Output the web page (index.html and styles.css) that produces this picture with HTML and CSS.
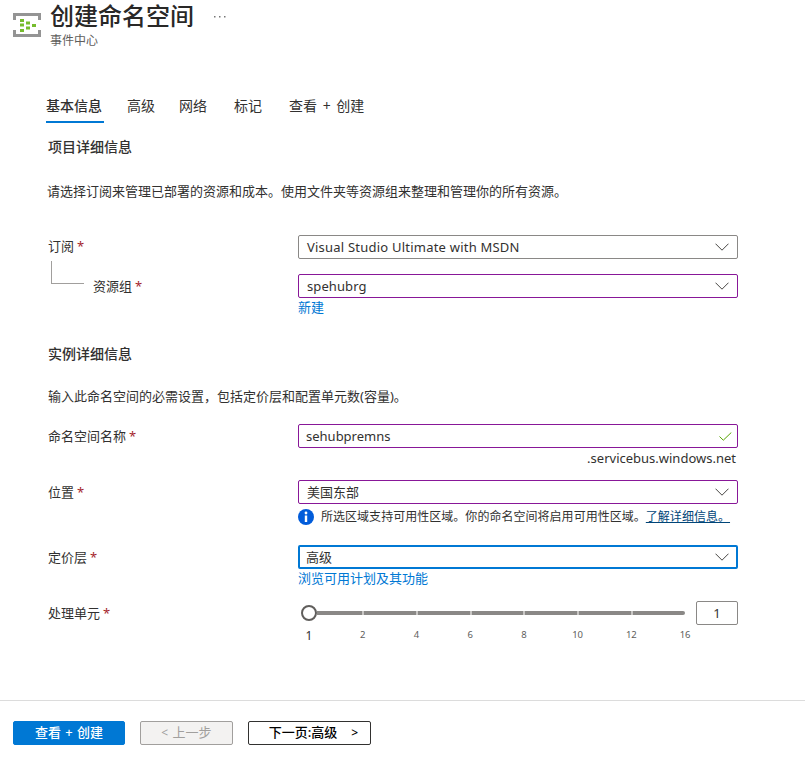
FILE: index.html
```html
<!DOCTYPE html>
<html lang="zh-CN">
<head>
<meta charset="utf-8">
<title>创建命名空间</title>
<link rel="stylesheet" href="styles.css">
</head>
<body>
<header class="header">
  <svg class="logo" width="28" height="24" viewBox="0 0 28 24">
    <path d="M0 0h28v7h-3V3H3v4H0zM0 24h28v-7h-3v4H3v-4H0z" fill="#949494"/>
    <path d="M7 6h4v3H7zM7 10.500h4v3H7zM7 16h4v3H7zM13 8.500h4v3h-4zM13 13.500h4v3h-4zM19 11h4v3h-4z" fill="#76bc2d"/>
  </svg>
  <div>
    <div class="title-line"><h1 class="title">创建命名空间</h1><svg class="more" width="12" height="4" viewBox="0 0 12 4"><path d="M0 1h1.500v1.500H0zM5 1h1.500v1.500H5zM10 1h1.500v1.500H10z" fill="#777"/></svg></div>
    <div class="subtitle">事件中心</div>
  </div>
</header>

<nav class="tabs">
  <a class="tab tab-active">基本信息</a>
  <a class="tab">高级</a>
  <a class="tab">网络</a>
  <a class="tab">标记</a>
  <a class="tab">查看 + 创建</a>
</nav>

<main class="form">
  <h2 class="heading">项目详细信息</h2>
  <p class="intro">请选择订阅来管理已部署的资源和成本。使用文件夹等资源组来整理和管理你的所有资源。</p>
  <div class="row row-subscription">
    <label class="label">订阅<span class="req">*</span></label>
    <div class="box"><span class="subscription">Visual Studio Ultimate with MSDN</span><svg class="chevron" width="14" height="8" viewBox="0 0 14 8"><path d="M.5.700 7 7.200 13.500.700"/></svg></div>
  </div>
  <div class="row row-group">
    <div class="nested"><span class="elbow"></span><label class="label">资源组<span class="req">*</span></label></div>
    <div>
      <div class="box box-edited"><span class="group-name">spehubrg</span><svg class="chevron" width="14" height="8" viewBox="0 0 14 8"><path d="M.5.700 7 7.200 13.500.700"/></svg></div>
      <a class="link link-new">新建</a>
    </div>
  </div>

  <h2 class="heading heading-instance">实例详细信息</h2>
  <p class="intro intro-instance">输入此命名空间的必需设置，包括定价层和配置单元数(容量)。</p>
  <div class="row row-name">
    <label class="label">命名空间名称<span class="req">*</span></label>
    <div>
      <div class="box box-edited box-valid"><span>sehubpremns</span><svg class="check" width="13" height="9" viewBox="0 0 13 9"><path d="M.5 4.500 4.300 8.200 12.300.500"/></svg></div>
      <div class="suffix">.servicebus.windows.net</div>
    </div>
  </div>
  <div class="row row-location">
    <label class="label">位置<span class="req">*</span></label>
    <div>
      <div class="box box-edited"><span>美国东部</span><svg class="chevron" width="14" height="8" viewBox="0 0 14 8"><path d="M.5.700 7 7.200 13.500.700"/></svg></div>
      <div class="info">
        <svg width="16" height="16" viewBox="0 0 16 16"><circle cx="8" cy="8" r="8" fill="#015cda"/><circle cx="8" cy="4" r="1.400" fill="#fff"/><path d="M6.800 6.500h2.400v6.500H6.800z" fill="#fff"/></svg>
        <span class="info-text">所选区域支持可用性区域。你的命名空间将启用可用性区域。<a class="info-link">了解详细信息。</a></span>
      </div>
    </div>
  </div>
  <div class="row row-tier">
    <label class="label">定价层<span class="req">*</span></label>
    <div>
      <div class="box box-focus"><span>高级</span><svg class="chevron" width="14" height="8" viewBox="0 0 14 8"><path d="M.5.700 7 7.200 13.500.700"/></svg></div>
      <a class="link link-plans">浏览可用计划及其功能</a>
    </div>
  </div>
  <div class="row row-units">
    <label class="label">处理单元<span class="req">*</span></label>
    <div>
      <div class="slider-line">
        <div class="slider"><span class="thumb"></span><span class="seg seg-first"></span><span class="seg"></span><span class="seg"></span><span class="seg"></span><span class="seg"></span><span class="seg"></span><span class="seg seg-last"></span></div>
        <div class="units">1</div>
      </div>
      <div class="ticks"><span class="tick-current">1</span><span>2</span><span>4</span><span>6</span><span>8</span><span>10</span><span>12</span><span>16</span></div>
    </div>
  </div>
</main>

<footer class="footer">
  <button class="btn btn-primary">查看 + 创建</button>
  <button class="btn btn-disabled"><span class="arrow">&lt;</span> 上一步</button>
  <button class="btn btn-next">下一页:高级<span class="arrow">&gt;</span></button>
</footer>
</body>
</html>
```

FILE: styles.css
```css
* { box-sizing: border-box; }

body {
  margin: 0;
  background: #fff;
  color: #323130;
  font: 13px/20px "Noto Sans", "Noto Sans CJK SC", sans-serif;
}

h1, h2, p { margin: 0; }
svg { display: block; flex: none; }

.header { display: flex; height: 50px; padding: 2px 0 0 13px; }
.logo { margin: 11px 9px 0 0; }
.title-line { display: flex; align-items: center; height: 28px; }
.title { font-size: 24px; font-weight: 500; line-height: 28px; color: #292827; }
.more { margin: 2px 0 0 20px; }
.subtitle { margin-top: 2px; font-size: 12px; line-height: 18px; color: #605e5c; }

.tabs { display: flex; height: 30px; margin: 43px 0 0 46px; font-size: 14px; line-height: 26px; }
.tab { margin-right: 27px; white-space: nowrap; word-spacing: 2px; }
.tab:nth-child(2) { margin-right: 24px; }
.tab-active { width: 58px; margin-right: 23px; border-bottom: 2px solid #0078d4; font-weight: 500; }

.form { width: 690px; margin-left: 48px; }
.heading { margin-top: 14px; font-size: 14px; font-weight: 500; line-height: 20px; }
.heading-instance { margin-top: 26px; }
.intro { margin-top: 24px; margin-left: -1px; white-space: nowrap; }
.intro-instance { margin-top: 22px; margin-left: 0; }

.row { display: grid; grid-template-columns: 250px 440px; align-items: start; }
.row-subscription { margin-top: 34px; }
.row-group { margin-top: 15px; }
.row-name { margin-top: 18px; }
.row-location { margin-top: 12px; }
.row-tier { margin-top: 18px; }
.row-units { margin-top: 14px; }
.label { line-height: 24px; }
.row-subscription .label { line-height: 23px; }
.req { margin-left: 3px; color: #a4262c; }
.nested { display: flex; }
.elbow { width: 33px; height: 23px; margin: -13px 9px 0 3px; border: solid #a19f9d; border-width: 0 0 1px 1px; }

.box {
  display: flex;
  align-items: center;
  justify-content: space-between;
  height: 24px;
  padding: 0 8px 0 8px;
  border: 1px solid #8a8886;
  border-radius: 2px;
}
.box-edited { border-color: #881798; }
.box-valid { padding: 0 5px 0 7px; }
.box-focus { border: 2px solid #0078d4; padding: 0 7px 0 6px; }
.subscription { letter-spacing: 0.220px; }
.group-name { letter-spacing: 0.100px; }
.chevron, .check { fill: none; stroke: #484644; stroke-width: 1; }
.check { stroke: #57a300; }

.link { display: block; color: #0078d4; }
.link-new { height: 20px; line-height: 19px; }
.link-plans { line-height: 18px; }
.suffix { padding-right: 2px; text-align: right; }
.info { display: flex; align-items: center; gap: 7px; margin-top: 3px; font-size: 12px; white-space: nowrap; }
.info-text { letter-spacing: 0.030px; }
.info-link { color: #004578; text-decoration: underline; }

.slider-line { display: flex; justify-content: space-between; align-items: center; }
.slider { display: flex; align-items: center; width: 387px; padding-left: 3px; }
.thumb { flex: none; width: 16px; height: 16px; border: 2px solid #605e5c; border-radius: 50%; }
.seg { flex: none; width: 53.800px; height: 4px; border-right: 2px solid #c8c6c4; background: #8a8886; }
.seg-first { width: 47px; }
.seg-last { border: 0; width: 52px; border-radius: 0 2px 2px 0; }
.units { width: 42px; height: 24px; border: 1px solid #8a8886; border-radius: 2px; text-align: center; line-height: 23px; }
.ticks { display: flex; width: 430px; margin: 2px 0 0 -16px; font-size: 9.500px; line-height: 16px; color: #605e5c; }
.ticks span { flex: 1; text-align: center; }
.ticks .tick-current { font-size: 12px; line-height: 17px; color: #323130; }

.footer { display: flex; gap: 15px; margin-top: 56px; padding: 20px 0 0 13px; border-top: 1px solid #dcdcdc; }
.btn { height: 24px; padding: 0 0 2px; border: 1px solid #323130; border-radius: 2px; background: #fff; font: 500 13px/20px "Noto Sans", "Noto Sans CJK SC", sans-serif; white-space: nowrap; }
.btn-primary { width: 112px; border-color: #0078d4; background: #0078d4; color: #fff; word-spacing: 1px; }
.btn-disabled { width: 93px; border-color: #a19f9d; background: #f3f2f1; color: #a19f9d; font-weight: 400; word-spacing: 1px; }
.btn-next { width: 123px; padding-left: 8px; color: #000; }
.arrow { font-size: 12px; }
.btn-next .arrow { margin-left: 14px; }
```
